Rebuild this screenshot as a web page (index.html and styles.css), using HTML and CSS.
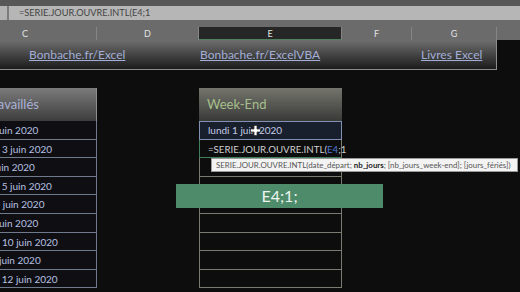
FILE: index.html
```html
<!DOCTYPE html>
<html lang="fr">
<head>
<meta charset="utf-8">
<title>SERIE.JOUR.OUVRE.INTL</title>
<link rel="stylesheet" href="styles.css">
</head>
<body>
<div class="screen">
  <div class="topstrip"></div>
  <div class="fbar">
    <div class="namebox"></div>
    <div class="formula">=SERIE.JOUR.OUVRE.INTL(E4;1</div>
  </div>
  <div class="colheads">
    <div class="ch c">C</div>
    <div class="ch d">D</div>
    <div class="ch e active">E</div>
    <div class="ch f">F</div>
    <div class="ch g">G</div>
    <div class="ch h"></div>
  </div>
  <div class="banner">
    <a class="link l1">Bonbache.fr/Excel</a>
    <a class="link">Bonbache.fr/ExcelVBA</a>
    <a class="link">Livres Excel</a>
  </div>
  <div class="tables">
    <div class="tbl left">
      <div class="th">Jours travaillés</div>
      <div class="td">mardi 2 juin 2020</div>
      <div class="td">mercredi 3 juin 2020</div>
      <div class="td">jeudi 4 juin 2020</div>
      <div class="td">vendredi 5 juin 2020</div>
      <div class="td">samedi 6 juin 2020</div>
      <div class="td">mardi 9 juin 2020</div>
      <div class="td">mercredi 10 juin 2020</div>
      <div class="td">jeudi 11 juin 2020</div>
      <div class="td">vendredi 12 juin 2020</div>
    </div>
    <div class="tbl week">
      <div class="th">Week-End</div>
      <div class="td sel">lundi 1 juin 2020</div>
      <div class="td edit">=SERIE.JOUR.OUVRE.INTL(<span class="ref">E4</span>;1</div>
      <div class="td"></div>
      <div class="td"></div>
      <div class="td"></div>
      <div class="td"></div>
      <div class="td"></div>
      <div class="td"></div>
      <div class="td"></div>
      <div class="tip">SERIE.JOUR.OUVRE.INTL(date_départ; <b>nb_jours</b>; [nb_jours_week-end]; [jours_fériés])</div>
      <div class="note">E4;1;</div>
      <svg class="cursor" width="11" height="11" viewBox="0 0 11 11">
        <path d="M4 0.5h3v3.5h3.5v3h-3.5v3.5h-3v-3.5h-3.5v-3h3.5z" fill="#ffffff" stroke="#333" stroke-width="0.8"/>
      </svg>
    </div>
  </div>
</div>
</body>
</html>
```
FILE: styles.css
```css
body {
  margin: 0;
}
.screen {
  width: 520px;
  height: 292px;
  overflow: hidden;
  position: relative;
  background: #0d0d0d;
  font-family: Lato, "Open Sans", sans-serif;
}
.topstrip {
  height: 6px;
  background: #575757;
}
.fbar {
  height: 14px;
  display: flex;
  gap: 2px;
  background: #7c7c7c;
}
.namebox {
  width: 7px;
  background: #b3b3b3;
}
.formula {
  flex: 1;
  background: #b6b6b6;
  color: #444;
  font-size: 9.2px;
  line-height: 14px;
  padding-left: 10px;
}
.colheads {
  display: flex;
  margin-left: -46px;
  padding-top: 7px;
  height: 20px;
  box-sizing: border-box;
  background: #6b6b6b;
}
.ch {
  height: 13px;
  line-height: 13px;
  text-align: center;
  font-size: 9px;
  color: #e2e2e2;
  border-right: 1px solid #858585;
  box-sizing: border-box;
}
.ch.c { width: 143px; }
.ch.d { width: 102px; }
.ch.e { width: 143px; }
.ch.f { width: 70px; }
.ch.g { width: 85px; }
.ch.h { flex: 1; border-right: none; }
.ch.active {
  background: #262626;
  border-bottom: 1px solid #4f7f5f;
}
.banner {
  width: 497px;
  height: 30px;
  box-sizing: border-box;
  background: linear-gradient(#6e6e6e, #1b1b1b);
  border-right: 1px solid #8c8c8c;
  border-bottom: 1px solid #8c8c8c;
  display: grid;
  grid-template-columns: 200px 221px 1fr;
  align-items: center;
}
.link {
  color: #a3aed6;
  text-decoration: underline;
  font-size: 12px;
}
.l1 {
  padding-left: 29px;
}
.tables {
  display: flex;
  gap: 102px;
  margin-left: -46px;
  margin-top: 18px;
}
.tbl {
  width: 143px;
  position: relative;
}
.th {
  height: 33px;
  line-height: 33px;
  font-size: 13px;
  padding-left: 7px;
  box-sizing: border-box;
  white-space: nowrap;
}
.left .th {
  color: #a9b1d6;
  background: linear-gradient(#7b7b7b, #3d3d3d);
  border-right: 1px solid #8d8d8d;
  text-indent: -6px;
}
.week .th {
  color: #a6bf8c;
  background: linear-gradient(#75756e, #393937);
  padding-left: 8px;
}
.td {
  height: 18.6px;
  line-height: 19px;
  font-size: 10px;
  box-sizing: border-box;
  white-space: nowrap;
  padding-left: 7px;
}
.left .td {
  color: #b8c0e2;
  background: #0f0f13;
  border-right: 1px solid #6f7a8c;
  border-bottom: 1px solid #6f7a8c;
}
.week .td {
  border-left: 1px solid #7a7a6e;
  border-right: 1px solid #7a7a6e;
  border-bottom: 1px solid #7a7a6e;
  padding-left: 8px;
}
.week .td.sel {
  background: #18202e;
  border: 1px solid #8290b4;
  color: #c6cbe4;
  line-height: 17px;
}
.week .td.edit {
  color: #cfcfcf;
  font-size: 9.7px;
  border-left-color: #3f7f5c;
  border-bottom-color: #3f7f5c;
  position: relative;
  z-index: 1;
}
.ref {
  color: #5079d4;
}
.tip {
  position: absolute;
  left: 12px;
  top: 70px;
  width: 307px;
  height: 14px;
  box-sizing: border-box;
  background: #f3f3f3;
  border: 1px solid #9a9a9a;
  color: #555;
  font-size: 7.9px;
  line-height: 12px;
  padding-left: 4px;
  white-space: nowrap;
  z-index: 2;
}
.tip b {
  color: #1e1e1e;
}
.note {
  position: absolute;
  left: -23px;
  top: 96px;
  width: 207px;
  height: 24px;
  background: #4d8b6b;
  color: #eef4ee;
  font-size: 16px;
  line-height: 24px;
  text-align: center;
  z-index: 3;
}
.cursor {
  position: absolute;
  left: 51px;
  top: 37px;
  z-index: 4;
}
```
